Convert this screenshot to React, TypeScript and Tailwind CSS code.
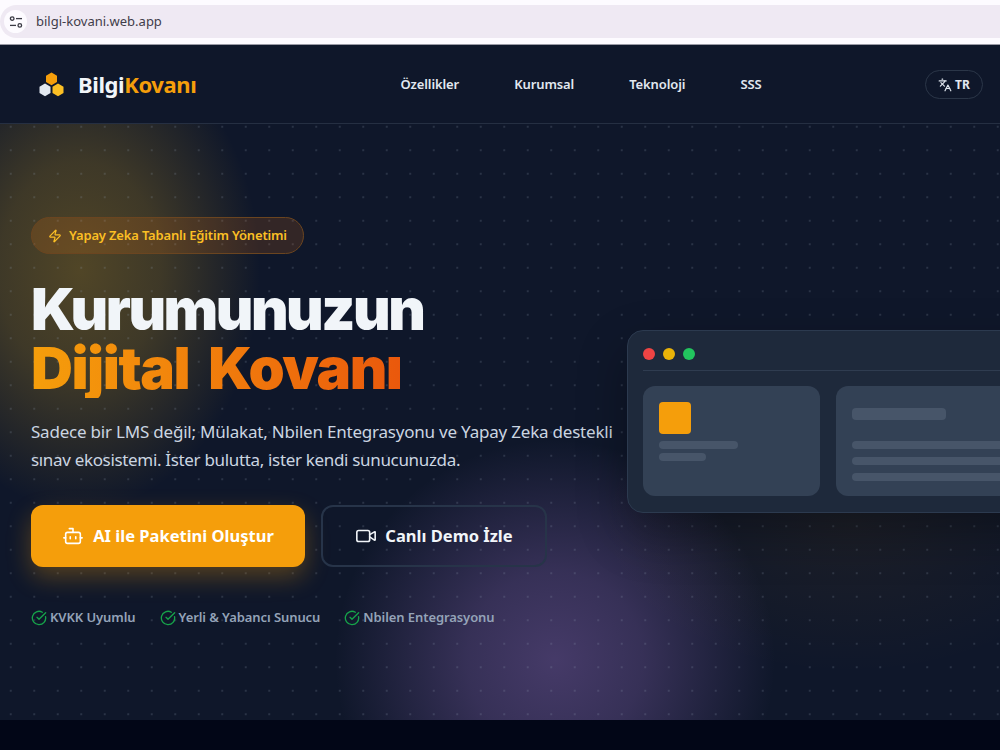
import { Bot, CircleCheckBig, Languages, Video, Zap } from "lucide-react";

function Chrome() {
  return (
    <div className="h-[45px] bg-[#fdfbff] flex flex-col pt-[5px] border-b border-[#9a9aa5]">
      <div className="h-[33px] bg-[#efe9f3] rounded-l-full flex items-center pl-[4px] gap-[9px]">
        <div className="w-[23px] h-[23px] rounded-full bg-[#fdfbff] flex items-center justify-center">
          <svg width="14" height="14" viewBox="0 0 14 14" fill="none" stroke="#3a3a44" strokeWidth="1.3">
            <circle cx="3.2" cy="3.6" r="1.8" />
            <path d="M7 3.6h6" />
            <circle cx="10.8" cy="10.4" r="1.8" />
            <path d="M1 10.4h6" />
          </svg>
        </div>
        <span className="text-[13px] text-[#3f3d4a]">bilgi-kovani.web.app</span>
      </div>
    </div>
  );
}

function Logo() {
  return (
    <div className="flex items-center gap-[14px] -mt-[1px]">
      <svg width="25" height="25" viewBox="0 0 25 25" className="block">
        <polygon points="12.5,0.5 18,3.7 18,10 12.5,13.2 7,10 7,3.7" fill="#f59e0b" />
        <polygon points="6,11.5 11.5,14.7 11.5,21 6,24.2 0.5,21 0.5,14.7" fill="#e2e8f0" />
        <polygon points="19,11.5 24.5,14.7 24.5,21 19,24.2 13.5,21 13.5,14.7" fill="#fbbf24" />
      </svg>
      <div className="text-[22px] font-bold tracking-[-0.4px] leading-none">
        <span className="text-[#f1f5f9]">Bilgi</span>
        <span className="text-[#f59e0b]">Kovanı</span>
      </div>
    </div>
  );
}

function Nav() {
  return (
    <nav className="h-[79px] bg-[#0f172a] border-b border-[#252f42] flex items-center pl-[39px] pr-[17px] pt-[1px]">
      <Logo />
      <div className="ml-[204px] mt-[1px] flex items-center gap-[55px] text-[13px] font-semibold text-[#e2e8f0] tracking-[-0.1px]">
        <span>Özellikler</span>
        <span>Kurumsal</span>
        <span>Teknoloji</span>
        <span>SSS</span>
      </div>
      <div className="ml-auto h-[29px] w-[58px] rounded-full border border-[#2b3648] flex items-center justify-center gap-[3px] text-[12px] font-bold text-[#e2e8f0]">
        <Languages className="w-[14px] h-[14px]" />
        <span>TR</span>
      </div>
    </nav>
  );
}

function Check({ label }: { label: string }) {
  return (
    <div className="flex items-center gap-[3px]">
      <CircleCheckBig className="w-[16px] h-[16px] text-[#16a34a]" />
      <span>{label}</span>
    </div>
  );
}

function Hero() {
  return (
    <section className="relative h-[596px] bg-[#0f172a] overflow-hidden flex items-start">
      <div className="absolute left-[-100px] top-[-94px] w-[360px] h-[480px] bg-[radial-gradient(closest-side,rgba(250,190,30,0.28),rgba(250,190,30,0.2)_45%,rgba(250,190,30,0))]" />
      <div className="absolute left-[335px] top-[316px] w-[440px] h-[440px] bg-[radial-gradient(closest-side,rgba(180,130,230,0.33),rgba(180,130,230,0.24)_40%,rgba(180,130,230,0))]" />
      <div className="absolute left-[600px] top-[250px] w-[500px] h-[300px] bg-[radial-gradient(closest-side,rgba(245,158,11,0.06),rgba(245,158,11,0))]" />
      <div className="absolute inset-0 bg-[radial-gradient(circle,rgba(148,163,184,0.26)_0.6px,transparent_1px)] bg-[size:23.5px_23.5px] bg-[position:-1px_-9px]" />

      <div className="relative w-[596px] shrink-0 ml-[31px] pt-[93px]">
        <div className="inline-flex items-center h-[37px] px-[16px] gap-[7px] rounded-full border border-[#6b4520] bg-[rgba(240,120,20,0.16)] text-[#fbbf24] text-[13px] font-semibold tracking-[-0.17px]">
          <Zap className="w-[14px] h-[14px]" />
          <span>Yapay Zeka Tabanlı Eğitim Yönetimi</span>
        </div>
        <h1 className="mt-[26px] text-[58px] leading-[59px] font-black text-[#f1f5f9] font-['Inter',sans-serif]">
          <div className="tracking-[-2.5px]">Kurumunuzun</div>
          <div className="inline-block tracking-[-1.5px] [word-spacing:9px] bg-gradient-to-r from-[#f59e0b] to-[#ea580c] bg-clip-text text-transparent">Dijital Kovanı</div>
        </h1>
        <p className="mt-[20px] text-[17px] leading-[28px] text-[#cbd5e1] whitespace-nowrap">
          <span className="tracking-[-0.21px]">Sadece bir LMS değil; Mülakat, Nbilen Entegrasyonu ve Yapay Zeka destekli</span>
          <br />
          <span className="tracking-[-0.33px]">sınav ekosistemi. İster bulutta, ister kendi sunucunuzda.</span>
        </p>
        <div className="mt-[31px] flex gap-[16px] text-[16.5px] font-bold">
          <div className="w-[274px] h-[62px] rounded-[12px] bg-[#f59e0b] text-white flex items-center justify-center gap-[9px] shadow-[0_10px_25px_rgba(245,158,11,0.3)]">
            <Bot className="w-[22px] h-[22px]" strokeWidth={1.75} />
            <span>AI ile Paketini Oluştur</span>
          </div>
          <div className="w-[226px] h-[62px] rounded-[12px] border-2 border-[#273449] text-[#f1f5f9] flex items-center justify-center gap-[8px]">
            <Video className="w-[22px] h-[22px]" strokeWidth={1.75} />
            <span>Canlı Demo İzle</span>
          </div>
        </div>
        <div className="mt-[41px] flex gap-[24px] text-[13px] font-semibold text-[#94a3b8] tracking-[-0.08px]">
          <Check label="KVKK Uyumlu" />
          <Check label="Yerli & Yabancı Sunucu" />
          <Check label="Nbilen Entegrasyonu" />
        </div>
      </div>

      <div className="relative shrink-0 w-[480px] h-[183px] mt-[206px] bg-[#1e293b] border border-[#2c3a4f] rounded-[16px] px-[15px] pt-[17px] shadow-[0_20px_50px_rgba(0,0,0,0.3)]">
        <div className="flex gap-[8px] pb-[10px] border-b border-[#2f3c50]">
          <div className="w-[12px] h-[12px] rounded-full bg-[#ef4444]" />
          <div className="w-[12px] h-[12px] rounded-full bg-[#eab308]" />
          <div className="w-[12px] h-[12px] rounded-full bg-[#22c55e]" />
        </div>
        <div className="mt-[15px] flex gap-[16px]">
          <div className="w-[177px] h-[110px] rounded-[12px] bg-[#334155] p-[16px] shrink-0">
            <div className="w-[32px] h-[32px] rounded-[4px] bg-[#f59e0b]" />
            <div className="mt-[7px] w-[79px] h-[8px] rounded-full bg-[#475569]" />
            <div className="mt-[4px] w-[47px] h-[8px] rounded-full bg-[#475569]" />
          </div>
          <div className="flex-1 h-[110px] rounded-[12px] bg-[#334155] p-[16px]">
            <div className="mt-[6px] w-[94px] h-[12px] rounded-[4px] bg-[#475569]" />
            <div className="mt-[21px] h-[8px] rounded-full bg-[#475569]" />
            <div className="mt-[8px] h-[8px] rounded-full bg-[#475569]" />
            <div className="mt-[8px] h-[8px] rounded-full bg-[#475569]" />
          </div>
        </div>
      </div>
    </section>
  );
}

export default function App() {
  return (
    <div className="w-[1000px] h-[750px] overflow-hidden bg-[#020617] font-['Noto_Sans','Open_Sans',sans-serif]">
      <Chrome />
      <Nav />
      <Hero />
    </div>
  );
}
